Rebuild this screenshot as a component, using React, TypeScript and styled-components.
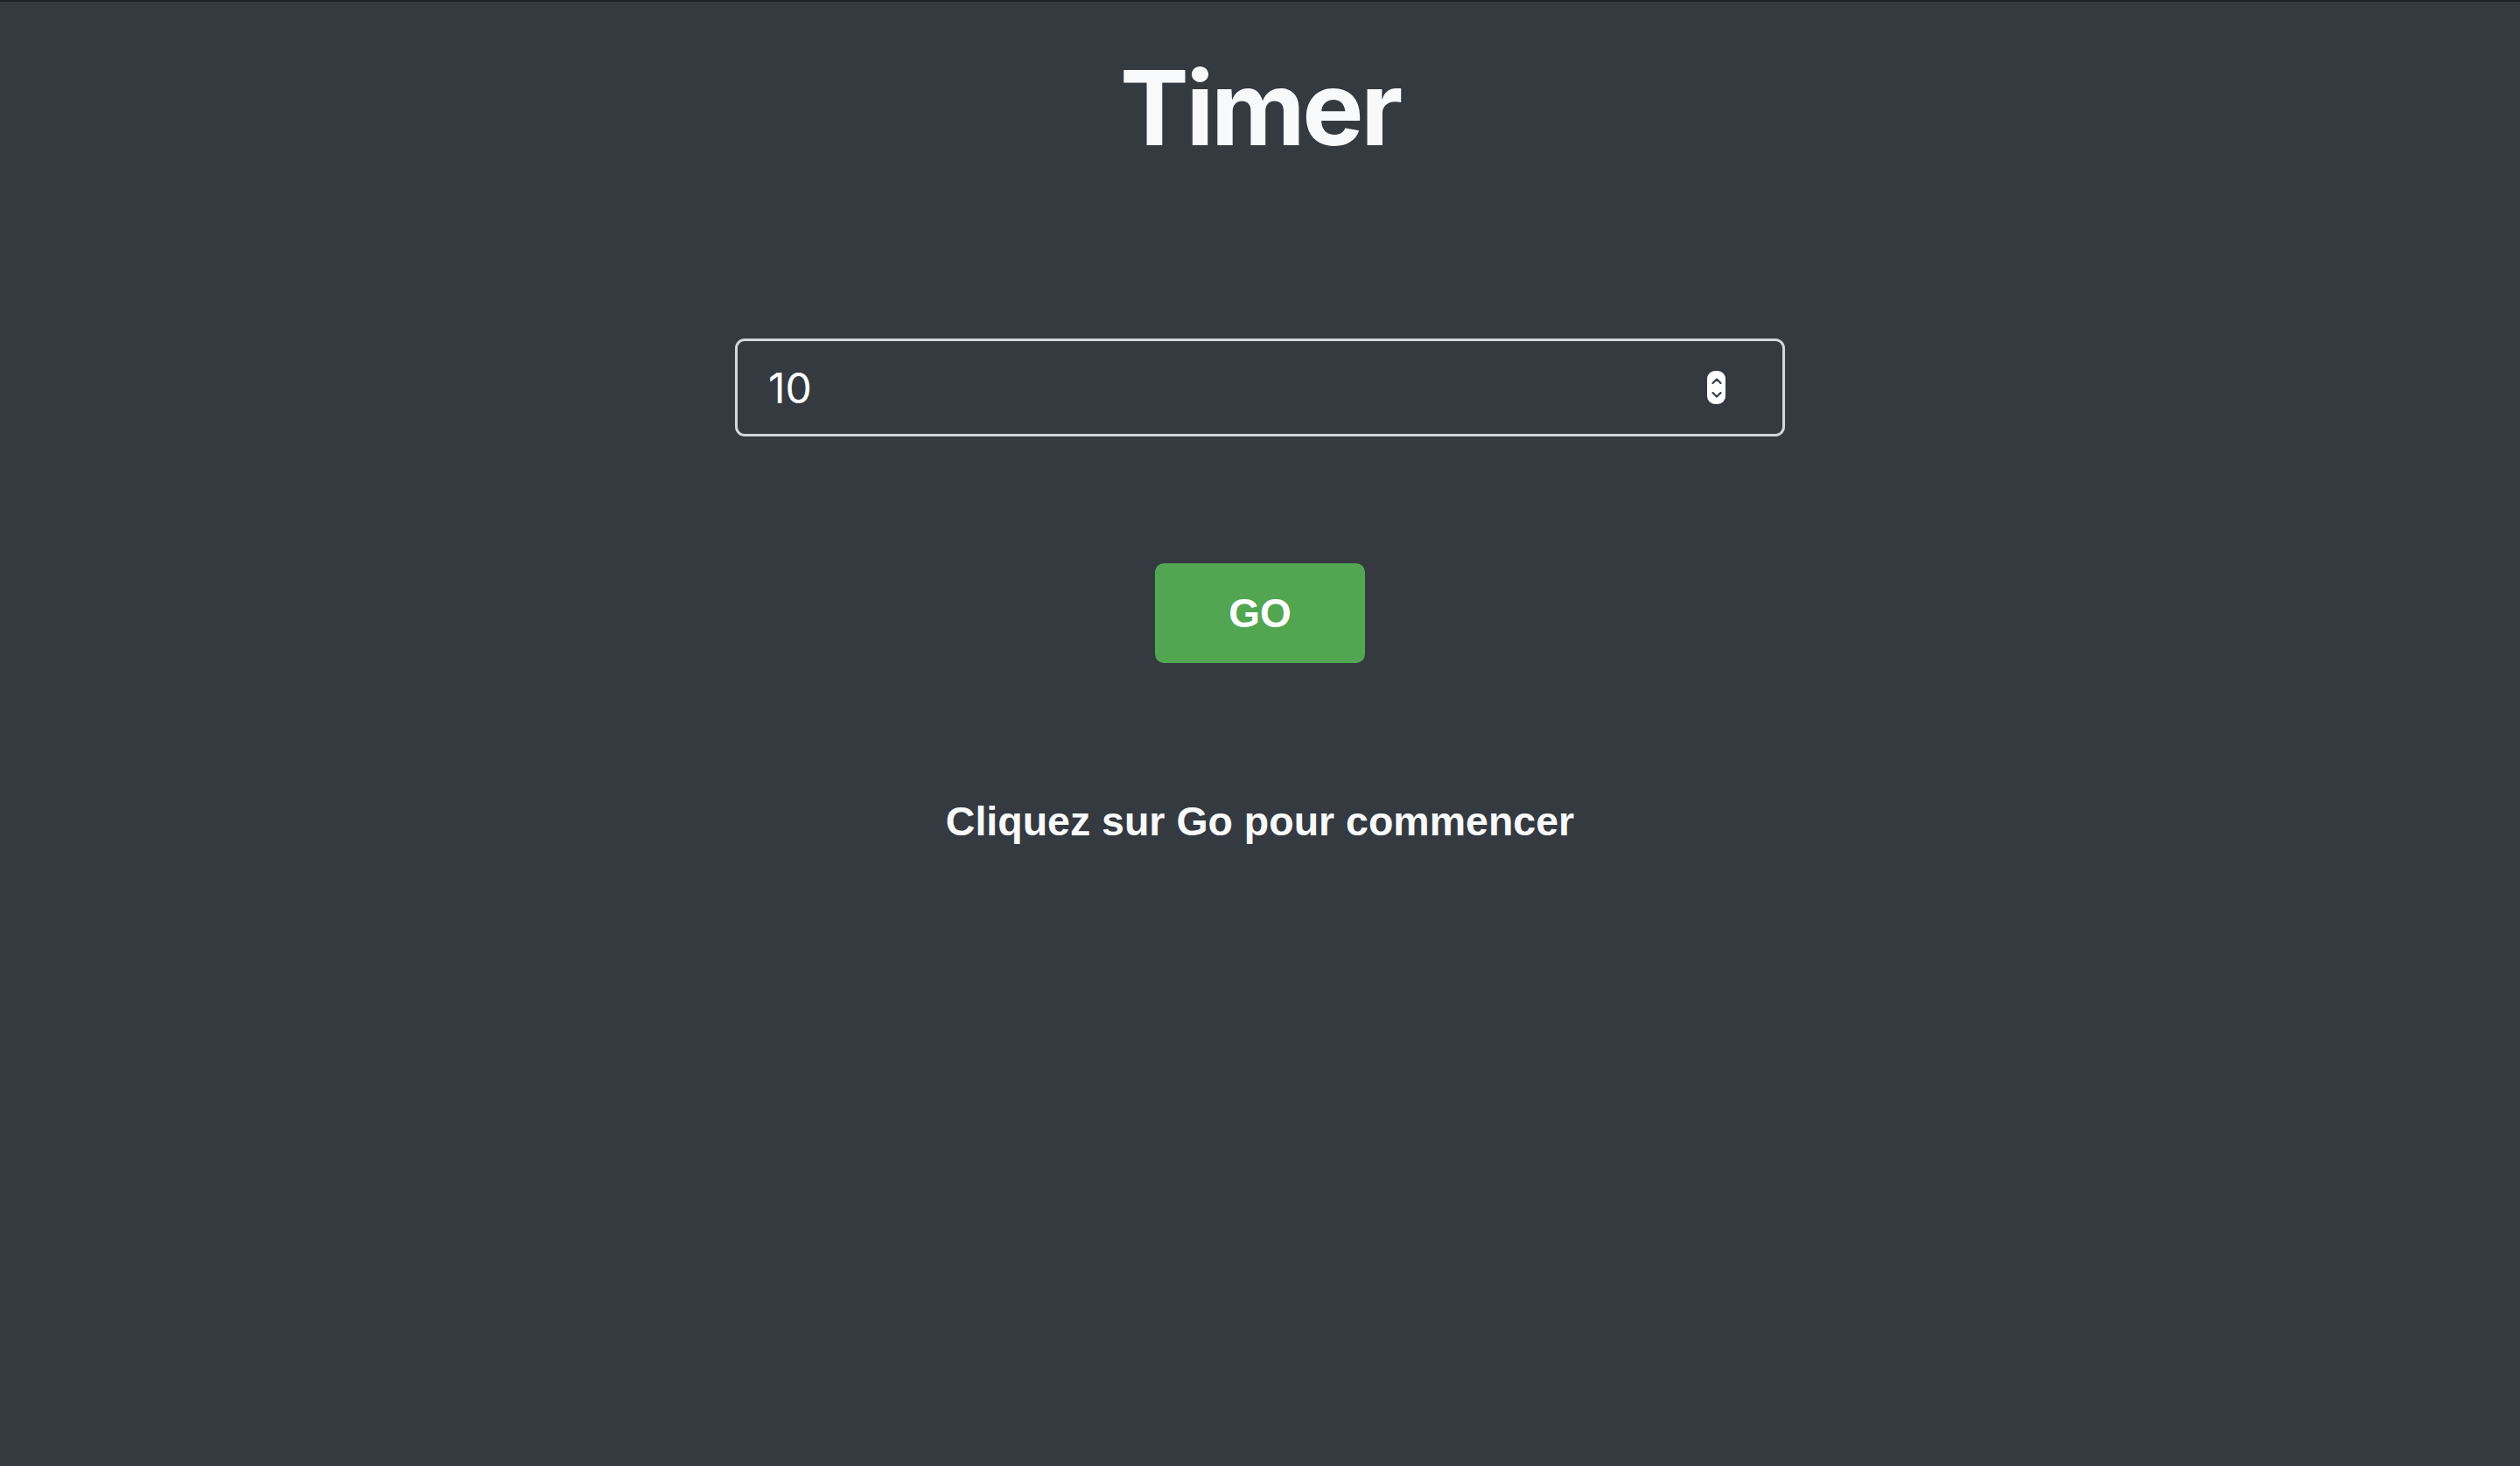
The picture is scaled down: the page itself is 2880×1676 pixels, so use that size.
import React, { useState } from "react";
import styled, { createGlobalStyle } from "styled-components";

const GlobalStyle = createGlobalStyle`
  html, body {
    margin: 0;
    padding: 0;
    background: #343a40;
  }
  body {
    min-height: 1676px;
    border-top: 2px solid #1f2327;
    box-sizing: border-box;
    font-family: Inter, "Noto Sans", sans-serif;
  }
`;

const Page = styled.main`
  display: flex;
  flex-direction: column;
  align-items: center;
  padding-top: 62px;
`;

const Title = styled.h1`
  margin: 0;
  font-family: Inter, "Noto Sans", sans-serif;
  font-weight: 700;
  font-size: 118px;
  line-height: 1;
  letter-spacing: -3.4px;
  color: #f8f9fa;
`;

const Field = styled.label`
  margin-top: 205px;
  box-sizing: border-box;
  width: 1200px;
  height: 112px;
  border: 3px solid #d3d7db;
  border-radius: 11px;
  display: flex;
  align-items: center;
  padding: 0 65px 0 35px;
  gap: 16px;
`;

const NumberInput = styled.input`
  flex: 1;
  min-width: 0;
  background: transparent;
  border: none;
  outline: none;
  color: #ffffff;
  font-family: Inter, "Noto Sans", sans-serif;
  font-size: 48px;
  padding: 0;
`;

const Spinner = styled.span`
  width: 21px;
  height: 38px;
  background: #ffffff;
  border-radius: 9px;
  display: flex;
  flex-direction: column;
  align-items: center;
  justify-content: center;
  gap: 9px;
`;

const GoButton = styled.button`
  margin-top: 145px;
  width: 240px;
  height: 114px;
  border: none;
  border-radius: 10px;
  background: #52a652;
  color: #ffffff;
  font-family: "Liberation Sans", Arial, sans-serif;
  font-weight: 700;
  font-size: 46px;
  cursor: pointer;
`;

const Status = styled.p`
  margin: 158px 0 0;
  font-family: "Liberation Sans", Arial, sans-serif;
  font-weight: 700;
  font-size: 46.5px;
  line-height: 1;
  color: #f8f9fa;
`;

const Chevron = ({ up }: { up?: boolean }) => (
  <svg width="12" height="7" viewBox="0 0 12 7">
    <path
      d={up ? "M1.5 6 L6 1.5 L10.5 6" : "M1.5 1 L6 5.5 L10.5 1"}
      fill="none"
      stroke="#3a3f44"
      strokeWidth="2.2"
      strokeLinecap="round"
      strokeLinejoin="round"
    />
  </svg>
);

export default function App() {
  const [value, setValue] = useState("10");
  return (
    <>
      <GlobalStyle />
      <Page>
        <Title>Timer</Title>
        <Field>
          <NumberInput
            type="text"
            inputMode="numeric"
            value={value}
            onChange={(e) => setValue(e.target.value)}
          />
          <Spinner>
            <Chevron up />
            <Chevron />
          </Spinner>
        </Field>
        <GoButton>GO</GoButton>
        <Status>Cliquez sur Go pour commencer</Status>
      </Page>
    </>
  );
}
